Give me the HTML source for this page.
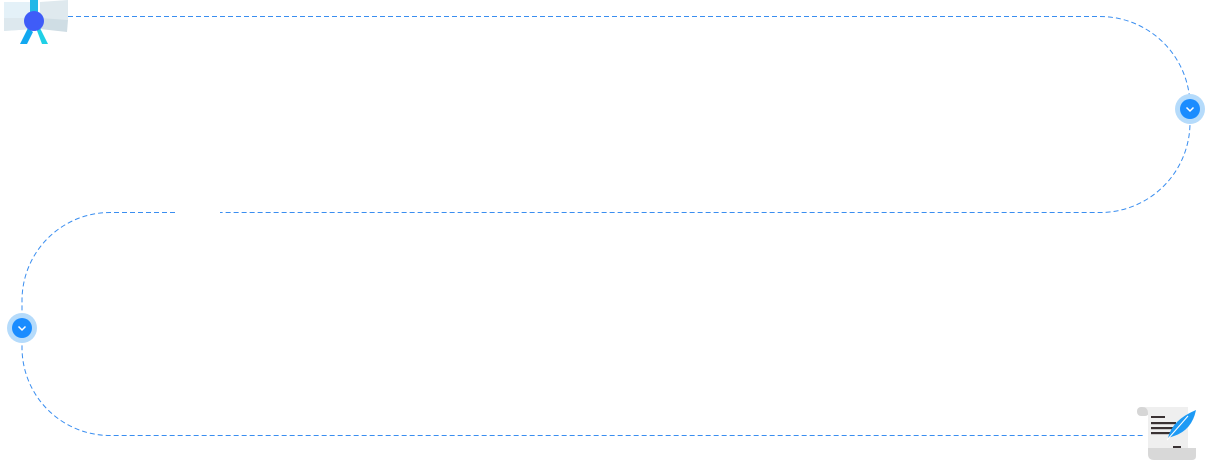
<!DOCTYPE html>
<html><head><style>html,body{margin:0;padding:0;background:#fff;width:1206px;height:460px;overflow:hidden}</style></head>
<body>
<svg width="1206" height="460" viewBox="0 0 1206 460" xmlns="http://www.w3.org/2000/svg">
<g fill="none" stroke="#3a8ef0" stroke-width="1" stroke-dasharray="5 3">
<path d="M68 16.5 H1100 A90 90 0 0 1 1190 106.5 V122 A90 90 0 0 1 1100 212.5 H220"/>
<path d="M175 212.5 H110 A88 88 0 0 0 22 300 V347 A88 88 0 0 0 110 435.5 H1145"/>
</g>
<g>
<circle cx="1190" cy="109" r="15" fill="#b5dbfb"/>
<circle cx="1190" cy="109" r="10" fill="#1a8cff"/>
<path d="M1186.5 107.5 L1190 111 L1193.5 107.5" stroke="#fff" stroke-width="1.5" fill="none"/>
<circle cx="22" cy="328" r="15" fill="#b5dbfb"/>
<circle cx="22" cy="328" r="10" fill="#1a8cff"/>
<path d="M18.5 326.5 L22 330 L25.5 326.5" stroke="#fff" stroke-width="1.5" fill="none"/>
</g>
<g>
<path d="M4 2 L34 2 L34 29 L4 31 Z" fill="#e4f1f8"/>
<path d="M40 2 L68 0 L68 20 L40 20 Z" fill="#dfe9ee"/>
<path d="M34 18 L4 18 L4 31 L34 29Z" fill="#dde8ee"/>
<path d="M40 18 L68 20 L67 32 L40 29Z" fill="#cfdde4"/>
<rect x="30" y="0" width="8" height="14" fill="#22b8e8"/>
<path d="M28 28 L20 44 L27 44 L33 32Z" fill="#12a8f0"/>
<path d="M36 28 L42 44 L48 44 L40 28Z" fill="#1fd0e6"/>
<circle cx="34" cy="21" r="10" fill="#3f5cf8"/>
</g>
<g>
<rect x="1137" y="407" width="12" height="9" rx="4" fill="#d6d6d6"/>
<path d="M1142 407 L1188 407 L1188 452 L1148 452 L1148 413 Q1148 407 1142 407Z" fill="#efefef"/>
<path d="M1148 448 L1196 448 L1196 456 Q1196 460 1192 460 L1154 460 Q1148 460 1148 454Z" fill="#d8d8d8"/>
<rect x="1151" y="416" width="14" height="2" fill="#3a3233"/>
<rect x="1151" y="422" width="25" height="2.2" fill="#3a3233"/>
<rect x="1151" y="427" width="25" height="2.2" fill="#3a3233"/>
<rect x="1151" y="432" width="22" height="2.2" fill="#3a3233"/>
<rect x="1173" y="446" width="8" height="2" fill="#3a3233"/>
<path d="M1168 438 Q1172 420 1196 410 Q1192 430 1174 436 Z" fill="#1e9af5"/>
<path d="M1167 440 L1188 416" stroke="#fff" stroke-width="1"/>
</g>
</svg>
</body></html>
